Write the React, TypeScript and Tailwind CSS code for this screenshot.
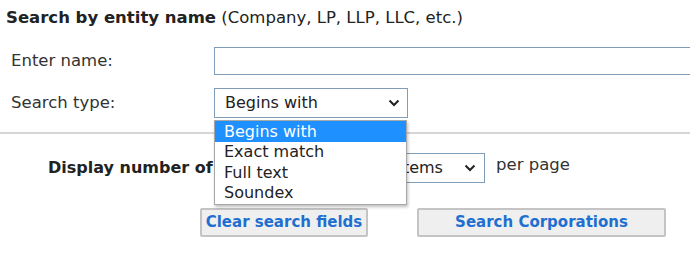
const font = { fontFamily: '"DejaVu Sans", Verdana, sans-serif' };

function Chevron() {
  return (
    <svg width="12" height="8" viewBox="0 0 12 8" className="shrink-0">
      <path d="M1.5 1.5 L6 6 L10.5 1.5" fill="none" stroke="#222" strokeWidth="2" />
    </svg>
  );
}

export default function App() {
  const options = ["Begins with", "Exact match", "Full text", "Soundex"];

  return (
    <div className="relative w-[700px] h-[254px] bg-white overflow-hidden text-[#333] text-[16px]" style={font}>
      <div className="pl-[6px] pt-[7px] leading-[22px] text-[#222] text-[16.5px]">
        <span className="font-bold">Search by entity name</span> (Company, LP, LLP, LLC, etc.)
      </div>

      <div className="mt-[18px] flex items-center">
        <label className="w-[214px] pl-[11px] text-[16.5px]">Enter name:</label>
        <input
          className="w-[476px] h-[28px] border border-r-0 border-[#7f9db9] outline-none px-2"
          defaultValue=""
        />
      </div>

      <div className="mt-[13px] flex items-center">
        <label className="w-[214px] pl-[11px] text-[16.5px]">Search type:</label>
        <div className="w-[194px] h-[30px] border border-[#7f9db9] flex items-center justify-between pl-[10px] pr-[7px] text-[#222]">
          <span>Begins with</span>
          <Chevron />
        </div>
      </div>

      <div className="mt-[14px] w-[690px] h-[2px] bg-[#d6d6d6]" />

      <div className="mt-[19px] flex items-center">
        <span className="pl-[48px] w-[364px] font-bold text-[#222] whitespace-nowrap">
          Display number of
        </span>
        <div className="w-[121px] h-[30px] border border-[#7f9db9] flex items-center justify-between pl-[8px] pr-[8px] text-[#222]">
          <span>25 items</span>
          <Chevron />
        </div>
        <span className="ml-[11px] -mt-[6px] text-[16.5px]">per page</span>
      </div>

      <div className="mt-[25px] flex items-center pl-[200px] gap-[49px]">
        <button className="w-[168px] h-[29px] border-2 border-[#c4c4c4] rounded-[2px] bg-[#efefef] font-bold text-[#1f6fd1] text-[15px]">
          Clear search fields
        </button>
        <button className="w-[249px] h-[29px] border-2 border-[#c4c4c4] rounded-[2px] bg-[#efefef] font-bold text-[#1f6fd1] text-[15px]">
          Search Corporations
        </button>
      </div>

      <ul className="absolute left-[214px] top-[120px] w-[193px] bg-white border border-[#a8a8a8] shadow-[1px_2px_3px_rgba(0,0,0,0.25)] text-[#222]">
        {options.map((o, i) => (
          <li
            key={o}
            className={
              i === 0
                ? "h-[21px] leading-[21px] pl-[9px] bg-[#1e90ff] text-white"
                : "h-[20.5px] leading-[20px] pl-[9px]"
            }
          >
            {o}
          </li>
        ))}
      </ul>
    </div>
  );
}
